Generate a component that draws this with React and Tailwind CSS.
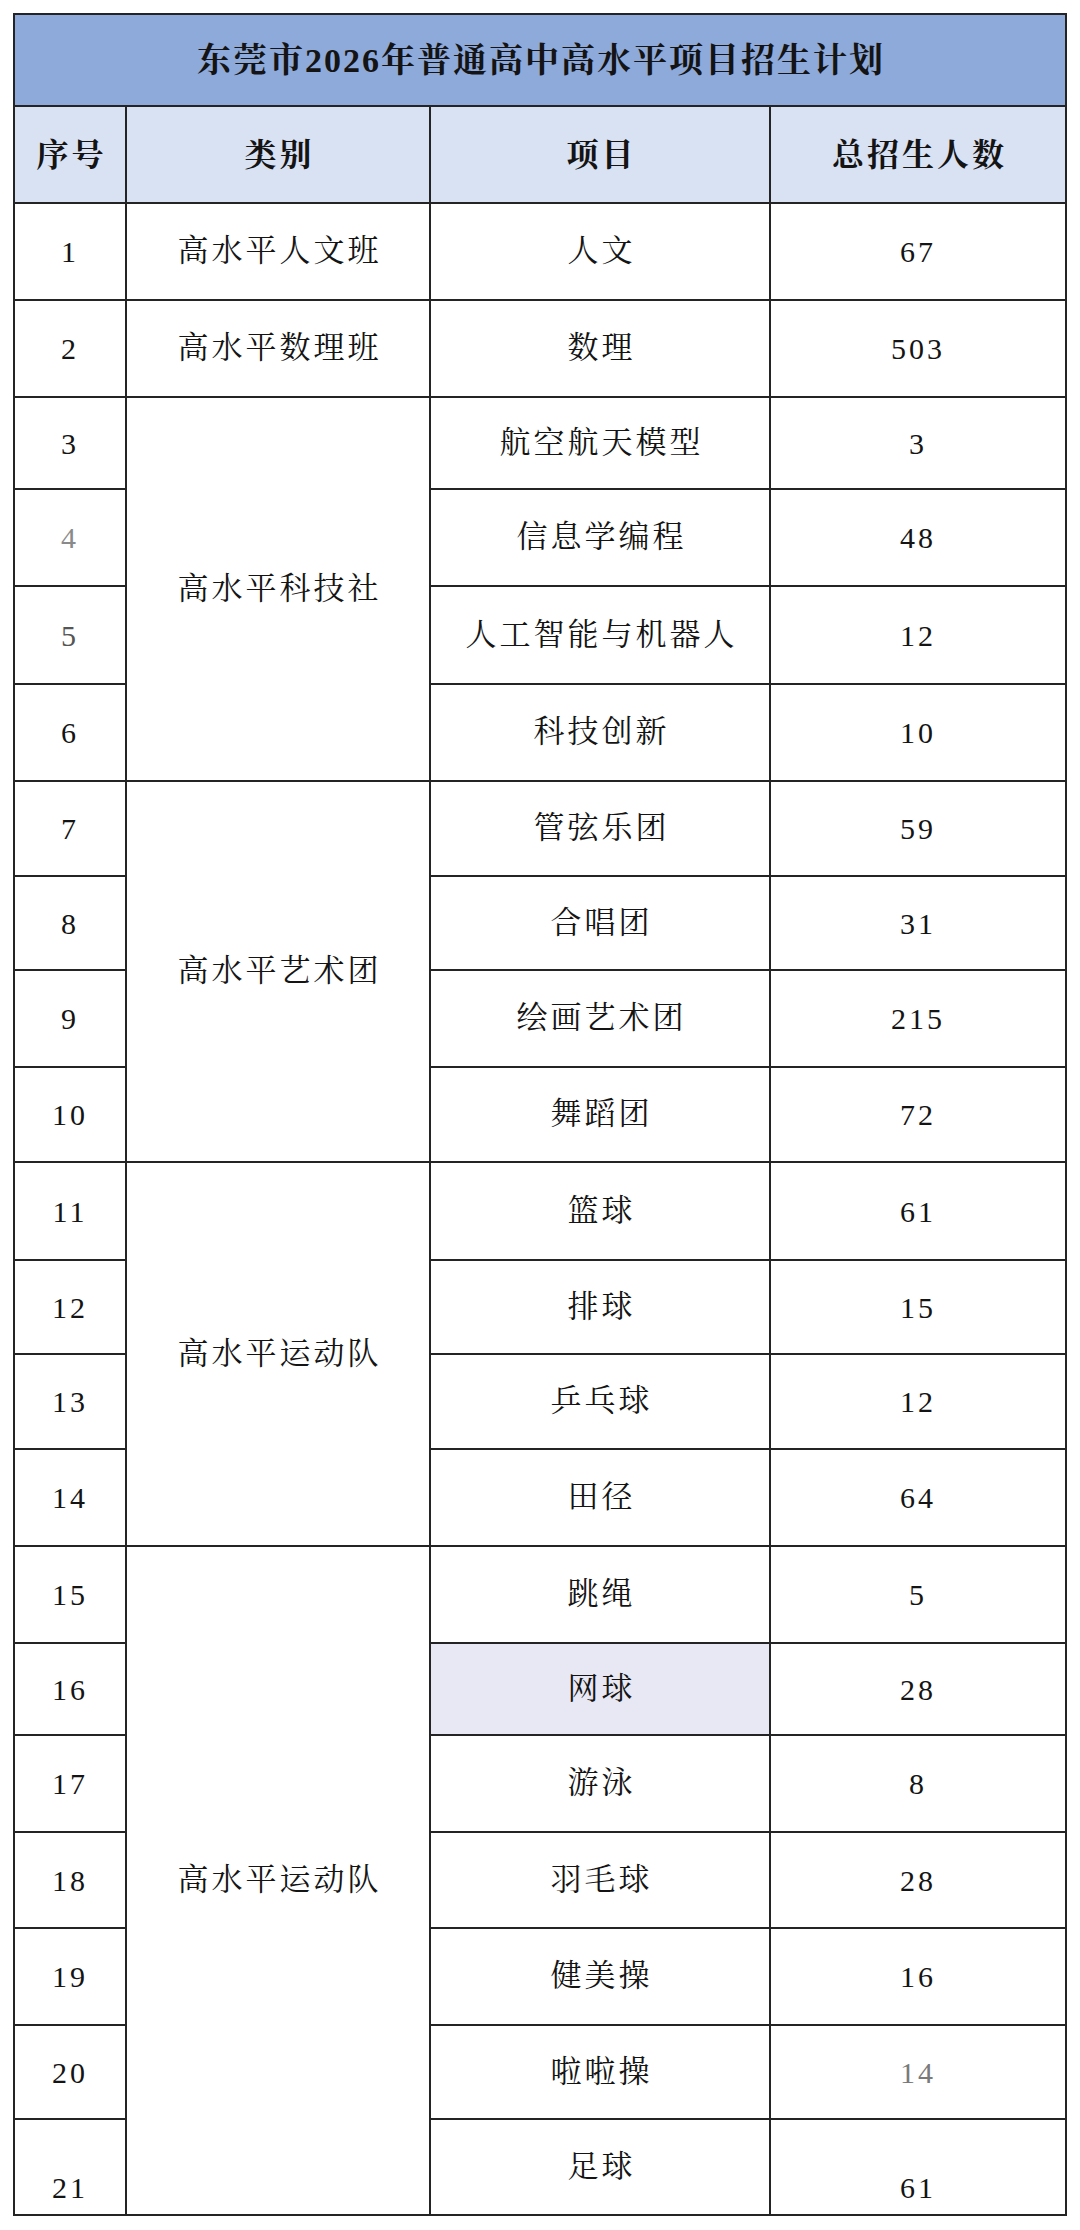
import React from "react";

const groups = [
  { cat: "高水平人文班", span: "row-span-1", items: [["1", "人文", "67"]] },
  { cat: "高水平数理班", span: "row-span-1", items: [["2", "数理", "503"]] },
  {
    cat: "高水平科技社",
    span: "row-span-4",
    items: [
      ["3", "航空航天模型", "3"],
      ["4", "信息学编程", "48", "text-[#8a8a8a]"],
      ["5", "人工智能与机器人", "12", "text-[#555555]"],
      ["6", "科技创新", "10"],
    ],
  },
  {
    cat: "高水平艺术团",
    span: "row-span-4",
    items: [
      ["7", "管弦乐团", "59"],
      ["8", "合唱团", "31"],
      ["9", "绘画艺术团", "215"],
      ["10", "舞蹈团", "72"],
    ],
  },
  {
    cat: "高水平运动队",
    span: "row-span-4",
    items: [
      ["11", "篮球", "61"],
      ["12", "排球", "15"],
      ["13", "乒乓球", "12"],
      ["14", "田径", "64"],
    ],
  },
  {
    cat: "高水平运动队",
    span: "row-span-7",
    items: [
      ["15", "跳绳", "5"],
      ["16", "网球", "28", "", "bg-[#e8e8f4]"],
      ["17", "游泳", "8"],
      ["18", "羽毛球", "28"],
      ["19", "健美操", "16"],
      ["20", "啦啦操", "14", "", "", "text-[#7a7a7a]"],
      ["21", "足球", "61", "", "", "", "bottom"],
    ],
  },
];

const numCell = "bg-white flex items-center justify-center text-[30px] tracking-[3px] text-[#141414]";
const numCellBottom = "bg-white flex items-end justify-center pb-[4px] text-[30px] tracking-[3px] text-[#141414]";
const txtCell = "bg-white flex items-center justify-center text-[31px] tracking-[3px] text-[#141414] pl-[3px]";
const txtCellHl = "bg-[#e8e8f4] flex items-center justify-center text-[31px] tracking-[3px] text-[#141414] pl-[3px]";
const head = "bg-[#d9e2f3] flex items-center justify-center text-[32px] font-bold tracking-[3px] text-[#141414] pl-[3px]";

export default function App() {
  return (
    <div className="bg-white w-[1080px] min-h-[2230px] pt-[13px] pl-[13px] font-['Liberation_Serif','Noto_Serif_CJK_SC','Noto_Sans_CJK_SC',serif]">
      <div className="w-[1054px] bg-[#242424] p-[2px] grid gap-[2px] grid-cols-[110px_302px_338px_294px] grid-rows-[90px_95px_95px_95px_90px_95px_96px_95px_93px_92px_95px_93px_96px_92px_93px_95px_95px_90px_95px_94px_95px_92px_94px]">
        <div className="col-span-4 bg-[#8eaadb] flex items-center justify-center text-[34px] font-bold tracking-[2px] text-[#141414] pl-[2px]">
          东莞市2026年普通高中高水平项目招生计划
        </div>
        <div className={head}>序号</div>
        <div className={head}>类别</div>
        <div className={head}>项目</div>
        <div className={head}>总招生人数</div>
        {groups.map((g, gi) =>
          g.items.map((it, ii) => {
            const [n, proj, cnt, nCls = "", pBg = "", cCls = "", align = ""] = it;
            const bottom = align === "bottom";
            return (
              <React.Fragment key={gi + "-" + ii}>
                <div className={bottom ? numCellBottom : numCell}>
                  <span className={nCls}>{n}</span>
                </div>
                {ii === 0 && <div className={g.span + " " + txtCell}>{g.cat}</div>}
                <div className={pBg ? txtCellHl : txtCell}>{proj}</div>
                <div className={bottom ? numCellBottom : numCell}>
                  <span className={cCls}>{cnt}</span>
                </div>
              </React.Fragment>
            );
          })
        )}
      </div>
    </div>
  );
}
